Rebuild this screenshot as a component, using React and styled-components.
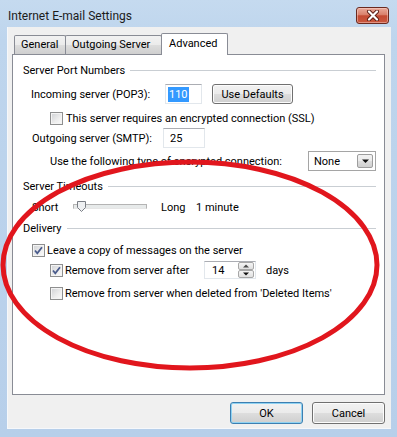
import styled, { createGlobalStyle } from "styled-components";

const GlobalStyle = createGlobalStyle`
  html, body {
    margin: 0;
    padding: 0;
  }
  body {
    width: 397px;
    height: 437px;
    overflow: hidden;
    font-family: Roboto, "Liberation Sans", sans-serif;
    font-size: 11px;
    color: #000;
  }
  * {
    box-sizing: border-box;
  }
`;

const Window = styled.div`
  position: relative;
  width: 397px;
  height: 437px;
  display: flex;
  flex-direction: column;
  padding: 0 6px 8px 7px;
  background: linear-gradient(180deg, #c5daef 0%, #bed5ed 40px, #b7cfea 100%);
`;

const TitleBar = styled.div`
  height: 27px;
  padding: 4px 2px 0 1px;
  display: flex;
  align-items: center;
  justify-content: space-between;
  span {
    font-size: 12px;
    color: #1b1b1b;
  }
`;

const CloseButton = styled.div`
  width: 33px;
  height: 17px;
  border: 1px solid #6a2a20;
  border-radius: 3px;
  background: linear-gradient(180deg, #e9aa9a 0%, #d9806c 45%, #c44a33 52%, #c9583f 100%);
  box-shadow: inset 0 0 0 1px rgba(255, 220, 210, 0.45);
  display: flex;
  align-items: center;
  justify-content: center;
`;

const Client = styled.div`
  flex: 1;
  display: flex;
  flex-direction: column;
  padding: 6px 7px 0 4px;
  background: #f0f0f0;
  border-left: 1px solid #f6f8fb;
  border-bottom: 1px solid #f6f8fb;
`;

const TabRow = styled.div`
  display: flex;
  align-items: flex-end;
  height: 21px;
  padding-left: 2px;
  position: relative;
  z-index: 1;
`;

const Tab = styled.div`
  width: ${(p) => p.$w}px;
  height: ${(p) => (p.$active ? 22 : 19)}px;
  margin-left: -1px;
  margin-bottom: ${(p) => (p.$active ? -1 : 0)}px;
  padding-left: ${(p) => (p.$active ? 7 : 6)}px;
  padding-top: ${(p) => (p.$active ? 3 : 2)}px;
  border: 1px solid #898c95;
  border-bottom: none;
  border-radius: 2px 2px 0 0;
  background: ${(p) =>
    p.$active ? "#fff" : "linear-gradient(180deg, #f2f2f2 0%, #ebebeb 50%, #dddddd 51%, #cfcfcf 100%)"};
  font-size: 11px;
  white-space: nowrap;
  &:first-child {
    margin-left: 0;
  }
`;

const Panel = styled.div`
  width: 373px;
  height: 341px;
  border: 1px solid #898c95;
  background: #fff;
  display: flex;
  flex-direction: column;
`;

const GroupHeader = styled.div`
  display: flex;
  align-items: center;
  height: 16px;
  margin-top: ${(p) => p.$mt}px;
  padding: 0 8px 0 10px;
  white-space: nowrap;
  &::after {
    content: "";
    flex: 1;
    height: 1px;
    margin-left: 5px;
    background: #c9ced3;
  }
`;

const Row = styled.div`
  display: flex;
  align-items: center;
  height: ${(p) => p.$h}px;
  margin-top: ${(p) => p.$mt}px;
  padding-left: ${(p) => p.$indent}px;
  white-space: nowrap;
`;

const Label = styled.span`
  display: inline-block;
  width: ${(p) => (p.$w ? `${p.$w}px` : "auto")};
  margin-left: ${(p) => p.$ml || 0}px;
  flex-shrink: 0;
`;

const TextBox = styled.div`
  width: ${(p) => p.$w}px;
  height: 20px;
  border: 1px solid #e2e7ec;
  border-top-color: #abadb3;
  display: flex;
  align-items: center;
  padding-left: ${(p) => p.$pl || 3}px;
  background: #fff;
  position: relative;
  flex-shrink: 0;
`;

const Selected = styled.span`
  background: #3399ff;
  color: #fff;
  padding: 1px 1px;
`;

const Button = styled.div`
  width: ${(p) => p.$w}px;
  height: ${(p) => p.$h}px;
  margin-left: ${(p) => p.$ml || 0}px;
  border: 1px solid ${(p) => (p.$default ? "#3c7fb1" : "#707070")};
  border-radius: 3px;
  background: linear-gradient(180deg, #f2f2f2 0%, #ebebeb 48%, #dddddd 52%, #cfcfcf 100%);
  box-shadow: inset 0 0 0 1px ${(p) => (p.$default ? "#8fd2f2" : "#fcfcfc")};
  display: flex;
  align-items: center;
  justify-content: center;
  flex-shrink: 0;
`;

const CheckBox = styled.div`
  width: 13px;
  height: 13px;
  border: 1px solid #8e8f8f;
  background: linear-gradient(135deg, #cfd1d4 0%, #eeeeee 60%, #fbfbfb 100%);
  box-shadow: inset 0 0 0 1px #f4f4f4;
  display: flex;
  align-items: center;
  justify-content: center;
  flex-shrink: 0;
  margin-right: ${(p) => p.$gap}px;
`;

const Combo = styled.div`
  width: 68px;
  height: 20px;
  margin-left: 0;
  border: 1px solid #a5a5a5;
  background: #fff;
  display: flex;
  align-items: center;
  justify-content: space-between;
  padding: 0 2px 0 5px;
  flex-shrink: 0;
`;

const ComboArrow = styled.div`
  width: 16px;
  height: 14px;
  border: 1px solid #9d9d9d;
  border-radius: 2px;
  background: linear-gradient(180deg, #f2f2f2 0%, #ebebeb 48%, #dddddd 52%, #cfcfcf 100%);
  display: flex;
  align-items: center;
  justify-content: center;
`;

const SpinBox = styled(TextBox)`
  height: 18px;
  padding-left: 7px;
  justify-content: space-between;
  padding-right: 1px;
`;

const SpinButtons = styled.div`
  display: flex;
  flex-direction: column;
  gap: 0;
`;

const SpinButton = styled.div`
  width: 16px;
  height: 8px;
  border: 1px solid #a7a7a7;
  border-radius: 2px;
  background: linear-gradient(180deg, #f5f5f5 0%, #e0e0e0 100%);
  display: flex;
  align-items: center;
  justify-content: center;
`;

const Slider = styled.div`
  position: relative;
  width: 74px;
  height: 16px;
  flex-shrink: 0;
  &::before {
    content: "";
    position: absolute;
    left: 0;
    right: 0;
    top: 5px;
    height: 3px;
    border: 1px solid #b4b4b4;
    border-bottom-color: #e6e6e6;
    background: #e7eaea;
  }
  svg {
    position: absolute;
    left: 4px;
    top: 2px;
  }
`;

const ButtonRow = styled.div`
  display: flex;
  justify-content: flex-end;
  gap: 9px;
  width: 373px;
  margin-top: 7px;
`;

const Ellipse = styled.svg`
  position: absolute;
  left: 0;
  top: 0;
  pointer-events: none;
`;

function Check({ checked, gap = 2 }) {
  return (
    <CheckBox $gap={gap}>
      {checked && (
        <svg width="11" height="11" viewBox="0 0 11 11">
          <path d="M2 5.5 L4.3 8.3 L9 2.2" fill="none" stroke="#4a5c8c" strokeWidth="1.8" />
        </svg>
      )}
    </CheckBox>
  );
}

function Triangle({ up, size = 7 }) {
  return (
    <svg width={size} height={size / 2 + 1} viewBox="0 0 8 5">
      <path d={up ? "M0 4.5 L4 0.5 L8 4.5 Z" : "M0 0.5 L4 4.5 L8 0.5 Z"} fill={up ? "#4a4a4a" : "#111"} />
    </svg>
  );
}

export default function App() {
  return (
    <>
      <GlobalStyle />
      <Window>
        <TitleBar>
          <span>Internet E-mail Settings</span>
          <CloseButton>
            <svg width="14" height="11" viewBox="0 0 14 11">
              <path d="M3 1.5 L11 9.5 M11 1.5 L3 9.5" stroke="#5a1c14" strokeWidth="4" strokeLinecap="round" />
              <path d="M3 1.5 L11 9.5 M11 1.5 L3 9.5" stroke="#fff" strokeWidth="2.2" strokeLinecap="round" />
            </svg>
          </CloseButton>
        </TitleBar>
        <Client>
          <TabRow>
            <Tab $w={52}>General</Tab>
            <Tab $w={97}>Outgoing Server</Tab>
            <Tab $w={67} $active>Advanced</Tab>
          </TabRow>
          <Panel>
            <GroupHeader $mt={7}>Server Port Numbers</GroupHeader>
            <Row $h={20} $mt={6} $indent={18}>
              <Label $w={134}>Incoming server (POP3):</Label>
              <TextBox $w={37} $pl={2}>
                <Selected>110</Selected>
              </TextBox>
              <Button $w={81} $h={20} $ml={10}>Use Defaults</Button>
            </Row>
            <Row $h={14} $mt={7} $indent={37}>
              <Check gap={3} />
              <Label>This server requires an encrypted connection (SSL)</Label>
            </Row>
            <Row $h={20} $mt={3} $indent={19}>
              <Label $w={131}>Outgoing server (SMTP):</Label>
              <TextBox $w={42} $pl={6}>25</TextBox>
            </Row>
            <Row $h={20} $mt={3} $indent={37}>
              <Label $w={258}>Use the following type of encrypted connection:</Label>
              <Combo>
                <span>None</span>
                <ComboArrow>
                  <Triangle />
                </ComboArrow>
              </Combo>
            </Row>
            <GroupHeader $mt={7}>Server Timeouts</GroupHeader>
            <Row $h={16} $mt={5} $indent={19}>
              <Label $w={41}>Short</Label>
              <Slider>
                <svg width="9" height="11" viewBox="0 0 9 11">
                  <path d="M0.5 0.5 H8.5 V6.5 L4.5 10.5 L0.5 6.5 Z" fill="#eef0f2" stroke="#7b7f86" />
                </svg>
              </Slider>
              <Label $w={35} $ml={14}>Long</Label>
              <Label>1 minute</Label>
            </Row>
            <GroupHeader $mt={5}>Delivery</GroupHeader>
            <Row $h={14} $mt={7} $indent={19}>
              <Check checked gap={2} />
              <Label>Leave a copy of messages on the server</Label>
            </Row>
            <Row $h={18} $mt={4} $indent={37}>
              <Check checked gap={2} />
              <Label $w={139}>Remove from server after</Label>
              <SpinBox $w={52}>
                <span>14</span>
                <SpinButtons>
                  <SpinButton>
                    <Triangle up size={6} />
                  </SpinButton>
                  <SpinButton>
                    <Triangle size={6} />
                  </SpinButton>
                </SpinButtons>
              </SpinBox>
              <Label $ml={10}>days</Label>
            </Row>
            <Row $h={14} $mt={7} $indent={37}>
              <Check gap={2} />
              <Label>Remove from server when deleted from 'Deleted Items'</Label>
            </Row>
          </Panel>
          <ButtonRow>
            <Button $w={73} $h={22} $default>
              OK
            </Button>
            <Button $w={73} $h={22}>
              Cancel
            </Button>
          </ButtonRow>
        </Client>
        <Ellipse width="397" height="437" viewBox="0 0 397 437">
          <ellipse cx="190" cy="265" rx="187" ry="103" fill="none" stroke="#e1161d" strokeWidth="5" />
        </Ellipse>
      </Window>
    </>
  );
}
